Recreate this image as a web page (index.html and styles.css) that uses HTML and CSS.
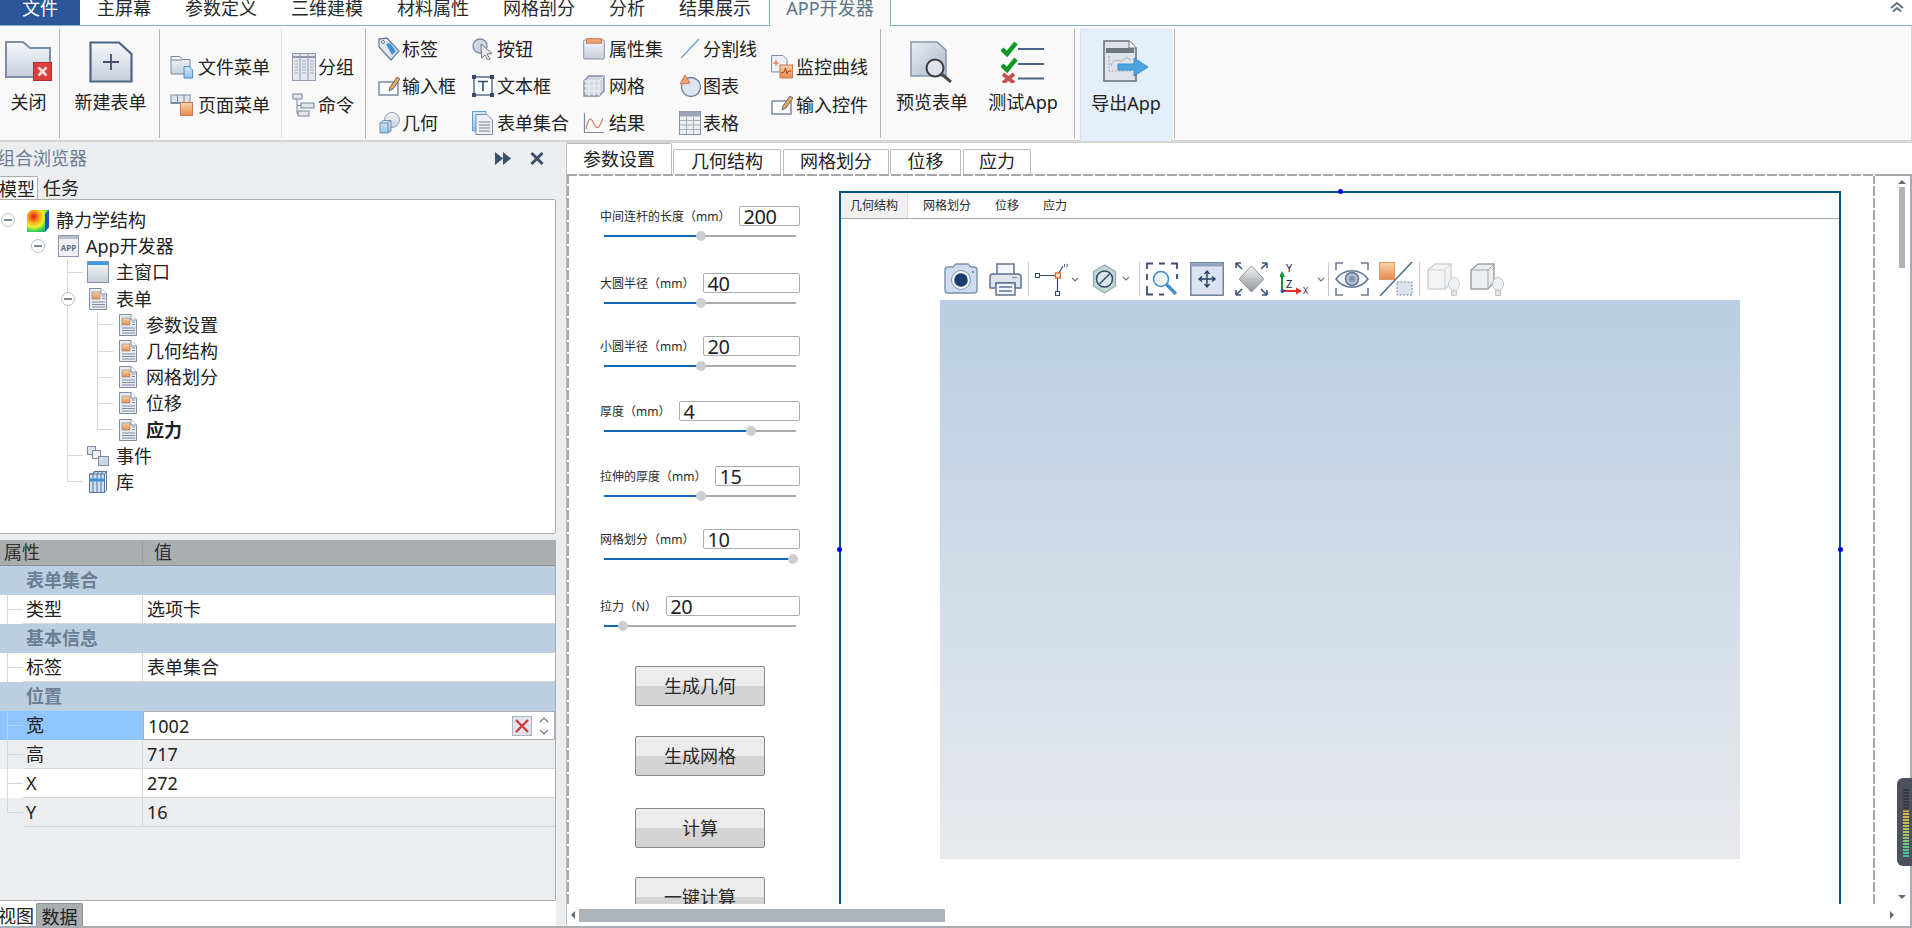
FILE: index.html
```html
<!DOCTYPE html>
<html lang="zh-CN">
<head>
<meta charset="utf-8">
<title>APP开发器</title>
<link rel="stylesheet" href="styles.css">
</head>
<body>
<svg class="defs" width="0" height="0" aria-hidden="true">
  <defs>
    <linearGradient id="gs" x1="0" y1="0" x2="0" y2="1"><stop offset="0" stop-color="#f6f7fa"/><stop offset="1" stop-color="#c6cedb"/></linearGradient>
    <linearGradient id="gd" x1="0" y1="0" x2="1" y2="1"><stop offset="0" stop-color="#e9ecf2"/><stop offset="1" stop-color="#aeb9ca"/></linearGradient>
    <linearGradient id="go" x1="0" y1="0" x2="0" y2="1"><stop offset="0" stop-color="#f8d4a8"/><stop offset="1" stop-color="#e88b4b"/></linearGradient>
    <linearGradient id="gb" x1="0" y1="0" x2="0" y2="1"><stop offset="0" stop-color="#d5e9f8"/><stop offset="1" stop-color="#8fc3ea"/></linearGradient>
    <linearGradient id="gm" x1="0" y1="0" x2="0" y2="1"><stop offset="0" stop-color="#f5f5f5"/><stop offset="1" stop-color="#8e9398"/></linearGradient>
    <radialGradient id="gc" cx=".3" cy=".3" r=".95"><stop offset="0" stop-color="#e0161b"/><stop offset=".28" stop-color="#f7a71b"/><stop offset=".5" stop-color="#eef02a"/><stop offset=".72" stop-color="#32d158"/><stop offset="1" stop-color="#1b6fe0"/></radialGradient>
    <symbol id="doc" viewBox="0 0 18 22">
      <path d="M.5.5H12L17.5 6V21.5H.5Z" fill="#e8ebf1" stroke="#7f8da4"/>
      <path d="M12 .5V6H17.5" fill="#fff" stroke="#7f8da4"/>
      <rect x="3" y="4" width="8" height="7" fill="url(#go)" stroke="#8c8c8c" stroke-width=".7"/>
      <path d="M13 8h3M13 10.500h3M3 14h13M3 16.500h13M3 19h13" stroke="#7e8ba0"/>
    </symbol>
    <symbol id="pencilbox" viewBox="0 0 22 22">
      <rect x="1" y="7" width="19" height="13" fill="#fbfcfd" stroke="#7b8aa3" stroke-width="1.500"/>
      <path d="M11 16l1-4 7-10 3 2-7 10Z" fill="#e8a653" stroke="#5d6c85"/>
    </symbol>
    <symbol id="chev" viewBox="0 0 8 5"><path d="M1 .8L4 3.800L7 .8" fill="none" stroke="#62707e" stroke-width="1.200"/></symbol>
  </defs>
</svg>

<div class="app">
  <nav class="menubar">
    <span class="m-file">文件</span>
    <span class="m-item">主屏幕</span>
    <span class="m-item">参数定义</span>
    <span class="m-item">三维建模</span>
    <span class="m-item">材料属性</span>
    <span class="m-item">网格剖分</span>
    <span class="m-item">分析</span>
    <span class="m-item">结果展示</span>
    <span class="m-active">APP开发器</span>
    <svg class="m-up" width="16" height="12" viewBox="0 0 16 12"><path d="M2 7L8 2L14 7M4 10.500L8 7L12 10.500" fill="none" stroke="#5f6f7b" stroke-width="1.800"/></svg>
  </nav>

  <section class="ribbon">
    <div class="grp g-close">
      <div class="big">
        <svg class="big-ic" width="47" height="42" viewBox="0 0 47 42">
          <path d="M1 1H18L25 7H45V36H1Z" fill="url(#gs)" stroke="#7c8ca6" stroke-width="2"/>
          <rect x="28.500" y="21.500" width="18" height="18" fill="#da3f3f" stroke="#b22e2e"/>
          <path d="M33.500 26.500l8 8M41.500 26.500l-8 8" stroke="#f7dcdc" stroke-width="2.500"/>
        </svg>
        <span>关闭</span>
      </div>
    </div>
    <div class="grp g-new">
      <div class="big">
        <svg class="big-ic" width="44" height="42" viewBox="0 0 44 42">
          <path d="M1.500 1.500H30L42.500 13V40.500H1.500Z" fill="url(#gs)" stroke="#4e6285" stroke-width="2.200"/>
          <path d="M22 13V29M14 21H30" stroke="#3f516e" stroke-width="1.800"/>
        </svg>
        <span>新建表单</span>
      </div>
    </div>
    <div class="grp g-menu stack">
      <div class="it">
        <svg width="24" height="24" viewBox="0 0 24 24"><path d="M1 1.500H10L12 4.500H20V19H1Z" fill="url(#gs)" stroke="#7a89a2"/><path d="M1 5H12" stroke="#7a89a2"/><path d="M14 11.500H19L22.500 15V23H14Z" fill="url(#gb)" stroke="#3f90d0"/></svg>
        <span>文件菜单</span>
      </div>
      <div class="it">
        <svg width="24" height="24" viewBox="0 0 24 24"><rect x="1" y="2" width="19" height="8" fill="#dfe3ea" stroke="#7a89a2"/><path d="M7.500 2V10M14 2V10" stroke="#7a89a2"/><path d="M1 10H12" stroke="#7a89a2" stroke-width="2"/><rect x="10.500" y="9.500" width="12" height="13" fill="url(#go)" stroke="#c9785a"/></svg>
        <span>页面菜单</span>
      </div>
    </div>
    <div class="grp g-group stack">
      <div class="it">
        <svg width="24" height="28" viewBox="0 0 24 28"><rect x=".5" y=".5" width="23" height="27" fill="#e4e7ec" stroke="#8e9ab0"/><path d="M1 4H23" stroke="#8e9ab0" stroke-width="2"/><path d="M8 1V27M16 1V27" stroke="#8e9ab0"/><path d="M3 8h3M3 11h3M3 14h3M3 17h3M3 20h3M10 8h4M10 11h4M10 14h4M10 17h4M10 20h4M18 8h4M18 11h4M18 14h4M18 17h4M18 20h4" stroke="#a4aebf"/></svg>
        <span>分组</span>
      </div>
      <div class="it">
        <svg width="24" height="24" viewBox="0 0 24 24"><rect x="1" y="1" width="9" height="5" fill="#e2e6ec" stroke="#75849c"/><rect x="9" y="10" width="13" height="5" fill="#e2e6ec" stroke="#75849c"/><rect x="6" y="18" width="11" height="5" fill="#e2e6ec" stroke="#75849c"/><path d="M5 6V20.500H6M5 12.500H9" fill="none" stroke="#75849c"/></svg>
        <span>命令</span>
      </div>
    </div>
    <div class="grp g-ctl">
      <div class="col c1">
        <div class="it"><svg width="22" height="24" viewBox="0 0 22 24"><path d="M1 2L9 1L21 14L13 23L1 10Z" fill="#dfe6f0" stroke="#6b7d9a" stroke-width="1.300"/><path d="M8 7l4-1 6 8-4 4Z" fill="#3e8fd6"/><circle cx="5" cy="5" r="1.500" fill="#fff" stroke="#6b7d9a"/></svg><span>标签</span></div>
        <div class="it"><svg width="22" height="22"><use href="#pencilbox"/></svg><span>输入框</span></div>
        <div class="it"><svg width="22" height="22" viewBox="0 0 22 22"><circle cx="14" cy="8" r="7.500" fill="url(#gs)" stroke="#8f9db3"/><path d="M2 11L5 8.500H13V19L10 21H2Z" fill="url(#gb)" stroke="#7a8ea9"/><path d="M2 11H10V21M10 11L13 8.500" fill="none" stroke="#7a8ea9"/></svg><span>几何</span></div>
      </div>
      <div class="col c2">
        <div class="it"><svg width="22" height="22" viewBox="0 0 22 22"><circle cx="8" cy="8" r="7" fill="#cfd8e5" stroke="#7c8ca6" stroke-width="1.300"/><path d="M9 6L20 15.500L15 16L18 21L15.500 22L13 17L9.500 20Z" fill="#e9ebef" stroke="#6d7786"/></svg><span>按钮</span></div>
        <div class="it"><svg width="22" height="22" viewBox="0 0 22 22"><rect x="2" y="2" width="18" height="18" fill="#fbfcfd" stroke="#34486b" stroke-width="1.200"/><path d="M6 6.500H16M11 6.500V16" stroke="#34486b" stroke-width="1.600"/><path d="M0 0h4v4H0ZM18 0h4v4h-4ZM0 18h4v4H0ZM18 18h4v4h-4Z" fill="#34486b"/></svg><span>文本框</span></div>
        <div class="it"><svg width="22" height="24" viewBox="0 0 22 24"><path d="M.5.5H14V20H.5Z" fill="url(#gb)" stroke="#5f9fd4"/><path d="M4 3.500H15L20.500 9V23.500H4Z" fill="#eef0f4" stroke="#7c8ca6"/><path d="M7 11h11M7 14h11M7 17h11M7 20h11" stroke="#6d7d96"/></svg><span>表单集合</span></div>
      </div>
      <div class="col c3">
        <div class="it"><svg width="22" height="22" viewBox="0 0 22 22"><rect x=".7" y="2" width="20.600" height="19" rx="1" fill="url(#gs)" stroke="#8593a9"/><rect x="3.500" y=".7" width="15" height="4.500" fill="#f0a46c" stroke="#c9785a"/></svg><span>属性集</span></div>
        <div class="it"><svg width="22" height="22" viewBox="0 0 22 22"><path d="M1 6L6 1H21V16L16 21H1Z" fill="#d3d8e0" stroke="#7c8ca6" stroke-width="1.400"/><path d="M1 6H16V21M16 6L21 1M6 6V21M11 6V21M1 11H16M1 16H16" fill="none" stroke="#f2f4f7"/></svg><span>网格</span></div>
        <div class="it"><svg width="22" height="22" viewBox="0 0 22 22"><path d="M1.500 1V20.500H21" fill="none" stroke="#7c8ca6" stroke-width="1.200"/><path d="M3 17C6 4 8 5 11 12S17 15 20 6" fill="none" stroke="#c9785a" stroke-width="1.100"/></svg><span>结果</span></div>
      </div>
      <div class="col c4">
        <div class="it"><svg width="22" height="22" viewBox="0 0 22 22"><path d="M2 20L20 1" stroke="#6aa0d0" stroke-width="1.300"/></svg><span>分割线</span></div>
        <div class="it"><svg width="22" height="24" viewBox="0 0 22 24"><circle cx="12" cy="13" r="9.500" fill="#dfe5ee" stroke="#6e82a5" stroke-width="1.300"/><path d="M1 10L6 1L11 9Z" fill="#f0a46c" stroke="#c9785a"/></svg><span>图表</span></div>
        <div class="it"><svg width="22" height="24" viewBox="0 0 22 24"><rect x=".5" y=".5" width="21" height="23" fill="#eceef2" stroke="#8593a9"/><path d="M1 3h20" stroke="#9aa6b8" stroke-width="5"/><path d="M1 9.500h20M1 14h20M1 18.500h20M7.500 6v17M14.500 6v17" stroke="#a5afbe"/></svg><span>表格</span></div>
      </div>
      <div class="col c5 stack">
        <div class="it"><svg width="22" height="24" viewBox="0 0 22 24"><path d="M.5.500H12L16 4.500V17H.5Z" fill="#eef0f4" stroke="#7c8ca6"/><path d="M5 5v6M2 8h6" stroke="#d8643c"/><rect x="9" y="10" width="12.500" height="13" fill="url(#go)" stroke="#c9785a"/><path d="M10 18l3-1 1.500-4 1.500 6 1.500-3h3" fill="none" stroke="#a83e20"/></svg><span>监控曲线</span></div>
        <div class="it"><svg width="22" height="22"><use href="#pencilbox"/></svg><span>输入控件</span></div>
      </div>
    </div>
    <div class="grp g-test">
      <div class="big">
        <svg class="big-ic" width="44" height="42" viewBox="0 0 44 42">
          <path d="M1 1H27L36 9V35H1Z" fill="url(#gd)" stroke="#8794ad" stroke-width="1.500"/>
          <circle cx="25" cy="27" r="8.500" fill="#eceef2" fill-opacity=".7" stroke="#3d3d3d" stroke-width="2"/>
          <path d="M31.500 33L41 41" stroke="#4a4a4a" stroke-width="3"/>
        </svg>
        <span>预览表单</span>
      </div>
      <div class="big b-app">
        <svg class="big-ic" width="44" height="42" viewBox="0 0 44 42">
          <path d="M1 8L6 13L15 2" fill="none" stroke="#0f9a24" stroke-width="4.500"/>
          <path d="M1 24L6 29L15 18" fill="none" stroke="#0f9a24" stroke-width="4.500"/>
          <path d="M2 33L13 42M13 33L2 42" fill="none" stroke="#c8504f" stroke-width="3.800"/>
          <path d="M17 8H43M17 23H43M17 37.500H43" stroke="#4a6388" stroke-width="2"/>
        </svg>
        <span>测试App</span>
      </div>
    </div>
    <div class="grp g-export">
      <div class="big">
        <svg class="big-ic" width="46" height="42" viewBox="0 0 46 42">
          <path d="M1 1H26L33 8V41H1Z" fill="#dfe3e8" stroke="#6a7078" stroke-width="1.600"/>
          <path d="M26 1V8H33" fill="#fff" stroke="#6a7078"/>
          <rect x="3" y="8" width="28" height="5" fill="#70767e"/>
          <path d="M6 16V31H28" fill="none" stroke="#9aa2ac" stroke-dasharray="2 1.500"/>
          <path d="M8 26C12 15 16 24 20 20S25 19 28 20" fill="none" stroke="#a3aab5"/>
          <path d="M15 24H31V18L45 27L31 36V30H15Z" fill="#4ba4e0" stroke="#3a8fd0"/>
        </svg>
        <span>导出App</span>
      </div>
    </div>
    <div class="grp g-rest"></div>
  </section>

  <main class="main">
    <aside class="left">
      <header class="pane-title">
        <span>组合浏览器</span>
        <svg class="ic-dbl" width="16" height="13" viewBox="0 0 16 13"><path d="M0 0L8 6.500L0 13ZM8 0L16 6.500L8 13Z" fill="#3d5269"/></svg>
        <svg class="ic-x" width="14" height="13" viewBox="0 0 14 13"><path d="M1.500 1L12.500 12M12.500 1L1.500 12" stroke="#3d5269" stroke-width="3"/></svg>
      </header>
      <div class="pane-tabs">
        <span class="pt-on">模型</span>
        <span class="pt-off">任务</span>
      </div>
      <div class="tree">
        <i class="vl vl-a"></i>
        <i class="vl vl-b"></i>
        <div class="row l0"><i class="exp"></i>
          <span class="ti"><svg width="22" height="23" viewBox="0 0 22 23"><path d="M4 1H22V18L18 23H0V5Z" fill="url(#gc)"/><path d="M22 1V18L18 23V5Z" fill="#1657c8"/></svg></span><span>静力学结构</span></div>
        <div class="row l1"><i class="exp"></i>
          <span class="ti"><svg width="21" height="22" viewBox="0 0 21 22"><rect x=".5" y=".5" width="20" height="21" fill="#eef0f3" stroke="#8d97a8"/><rect x="1" y="1" width="19" height="3" fill="#b8c0cc"/><text x="10.500" y="16" class="appt">APP</text></svg></span><span>App开发器</span></div>
        <div class="row l2"><i class="br"></i>
          <span class="ti"><svg width="22" height="22" viewBox="0 0 22 22"><rect x=".5" y=".5" width="21" height="21" fill="url(#gs)" stroke="#8593a9"/><rect x="1" y="1" width="20" height="3" fill="#3d9be0"/></svg></span><span>主窗口</span></div>
        <div class="row l2"><i class="exp"></i>
          <span class="ti"><svg width="18" height="22"><use href="#doc"/></svg></span><span>表单</span></div>
        <div class="row l3"><i class="br"></i><span class="ti"><svg width="18" height="22"><use href="#doc"/></svg></span><span>参数设置</span></div>
        <div class="row l3"><i class="br"></i><span class="ti"><svg width="18" height="22"><use href="#doc"/></svg></span><span>几何结构</span></div>
        <div class="row l3"><i class="br"></i><span class="ti"><svg width="18" height="22"><use href="#doc"/></svg></span><span>网格划分</span></div>
        <div class="row l3"><i class="br"></i><span class="ti"><svg width="18" height="22"><use href="#doc"/></svg></span><span>位移</span></div>
        <div class="row l3"><i class="br"></i><span class="ti"><svg width="18" height="22"><use href="#doc"/></svg></span><strong>应力</strong></div>
        <div class="row l2"><i class="br"></i>
          <span class="ti"><svg width="22" height="20" viewBox="0 0 22 20"><rect x=".5" y=".5" width="8" height="8" fill="#dfe3ea" stroke="#7c8ca6"/><rect x="5.500" y="4.500" width="8" height="8" fill="#eceff3" stroke="#7c8ca6"/><rect x="11.500" y="10.500" width="10" height="9" fill="#cfd9e6" stroke="#7c8ca6"/></svg></span><span>事件</span></div>
        <div class="row l2"><i class="br"></i>
          <span class="ti"><svg width="18" height="22" viewBox="0 0 18 22"><path d="M3.500 3L5 .5H17.500L15.500 3V21.500H.5V3Z" fill="#cfe0f0" stroke="#55779f"/><path d="M.5 3h15M4 3v18.500M8 3v18.500M12 3v18.500M4 3L6 .5M8 3l2-2.500M12 3l2-2.500M15.500 21.500L17.500 19V.5" fill="none" stroke="#55779f"/><path d="M1 9h14" stroke="#3d94d8" stroke-width="3"/></svg></span><span>库</span></div>
      </div>

      <div class="props">
        <div class="p-head"><span class="ph-name">属性</span><span class="ph-val">值</span></div>
        <div class="p-grp">表单集合</div>
        <div class="p-row r-w"><i class="gut"></i><span class="p-n">类型</span><span class="p-v">选项卡</span></div>
        <div class="p-grp">基本信息</div>
        <div class="p-row r-w"><i class="gut"></i><span class="p-n">标签</span><span class="p-v">表单集合</span></div>
        <div class="p-grp">位置</div>
        <div class="p-row r-sel"><i class="gut"></i><span class="p-n">宽</span>
          <div class="p-edit"><span>1002</span>
            <svg class="ed-x" width="20" height="20" viewBox="0 0 20 20"><rect x=".5" y=".5" width="19" height="19" fill="#dfe4ec" stroke="#a9b4c4"/><path d="M4 4l12 12M16 4L4 16" stroke="#d4383b" stroke-width="2.400"/></svg>
            <svg class="ed-s" width="12" height="22" viewBox="0 0 12 22"><path d="M2 7L6 3L10 7M2 15L6 19L10 15" fill="none" stroke="#6a7886" stroke-width="1.200"/></svg>
          </div>
        </div>
        <div class="p-row r-g"><i class="gut"></i><span class="p-n">高</span><span class="p-v">717</span></div>
        <div class="p-row r-w"><i class="gut"></i><span class="p-n">X</span><span class="p-v">272</span></div>
        <div class="p-row r-g"><i class="gut end"></i><span class="p-n">Y</span><span class="p-v">16</span></div>
      </div>

      <div class="pane-foot">
        <span class="pf-off">视图</span>
        <span class="pf-on">数据</span>
      </div>
    </aside>

    <section class="right">
      <div class="dtabs">
        <span class="dt on">参数设置</span>
        <span class="dt t2">几何结构</span>
        <span class="dt t3">网格划分</span>
        <span class="dt t4">位移</span>
        <span class="dt t5">应力</span>
      </div>
      <div class="dframe">
        <div class="canvas">
          <div class="form">
            <div class="field f67"><div class="line"><span class="lbl">中间连杆的长度（mm）</span><div class="inp">200</div></div><div class="slider" style="--v:50.500%"><i></i></div></div>
            <div class="field f63"><div class="line"><span class="lbl">大圆半径（mm）</span><div class="inp">40</div></div><div class="slider" style="--v:50.500%"><i></i></div></div>
            <div class="field f65"><div class="line"><span class="lbl">小圆半径（mm）</span><div class="inp">20</div></div><div class="slider" style="--v:50.500%"><i></i></div></div>
            <div class="field f65"><div class="line"><span class="lbl">厚度（mm）</span><div class="inp">4</div></div><div class="slider" style="--v:76.500%"><i></i></div></div>
            <div class="field f63"><div class="line"><span class="lbl">拉伸的厚度（mm）</span><div class="inp">15</div></div><div class="slider" style="--v:50.500%"><i></i></div></div>
            <div class="field f67"><div class="line"><span class="lbl">网格划分（mm）</span><div class="inp">10</div></div><div class="slider" style="--v:98.400%"><i></i></div></div>
            <div class="field f70"><div class="line"><span class="lbl">拉力（N）</span><div class="inp">20</div></div><div class="slider" style="--v:10%"><i></i></div></div>
            <div class="btn g30">生成几何</div>
            <div class="btn g32">生成网格</div>
            <div class="btn g29">计算</div>
            <div class="btn">一键计算</div>
          </div>

          <div class="sel">
            <i class="hd hd-t"></i><i class="hd hd-l"></i><i class="hd hd-r"></i>
            <div class="itabs">
              <span class="it-on">几何结构</span>
              <span class="it-off a">网格划分</span>
              <span class="it-off b">位移</span>
              <span class="it-off c">应力</span>
            </div>
            <div class="tools">
              <svg width="45" height="34" viewBox="0 0 45 34"><path d="M1 8C1 6 2 5 4 5H9L12 2H24L27 5H30C32 5 33 6 33 8V28C33 30 32 31 30 31H4C2 31 1 30 1 28Z" fill="#cdddee" stroke="#7d93b0" stroke-width="1.400"/><circle cx="17" cy="18" r="9.500" fill="#f4f7fb" stroke="#7d93b0"/><circle cx="17" cy="18" r="6.800" fill="#1f3a6e"/><circle cx="29" cy="10" r="1" fill="#566f92"/></svg>
              <svg width="39" height="34" viewBox="0 0 39 34"><path d="M8 12V2H25V12" fill="#f4f6f9" stroke="#5d7396" stroke-width="1.500"/><path d="M1 15C1 13 2 12 4 12H29C31 12 32 13 32 15V26H26V21H7V26H1Z" fill="#dde4ee" stroke="#5d7396" stroke-width="1.500"/><path d="M7 21H26V33H7Z" fill="#f4f6f9" stroke="#5d7396" stroke-width="1.500"/><path d="M10 25H23M10 29H23" stroke="#5d7396" stroke-width="1.500"/><path d="M23 15.500h5" stroke="#8ea0ba" stroke-width="1.500"/></svg>
              <i class="sep"></i>
              <svg width="57" height="34" viewBox="0 0 57 34"><path d="M2 13.500H22.500M22.500 13.500V30M22.500 13.500L28 4" fill="none" stroke="#34496b" stroke-width="1.200"/><rect x=".5" y="11.500" width="4" height="4" fill="#fff" stroke="#34496b"/><rect x="20.500" y="11" width="5" height="5" fill="#f5e0cc" stroke="#d26a2e" stroke-width="1.300"/><rect x="20.500" y="29.500" width="4" height="4" fill="#fff" stroke="#34496b"/><path d="M29.500 2v3M31.500 2c1.500 0 1.500 3-.5 3" fill="none" stroke="#34496b" stroke-width=".8"/><svg x="36" y="15" width="8" height="5"><use href="#chev"/></svg></svg>
              <svg width="47" height="34" viewBox="0 0 47 34"><path d="M12.500 3L23.500 9.500V24L12.500 31L1.500 24V9.500Z" fill="#c5d6d6" stroke="#90aab0" stroke-width="1.300"/><circle cx="12.500" cy="17" r="8" fill="#dbe6ea" stroke="#2e4a66" stroke-width="1.500"/><path d="M7.500 22L17.500 12" stroke="#2e4a66" stroke-width="1.500"/><svg x="30" y="14" width="8" height="5"><use href="#chev"/></svg></svg>
              <i class="sep"></i>
              <svg width="44" height="34" viewBox="0 0 44 34"><path d="M1 7V1.500H7M13 1.500H19M25 1.500H31V7M31 12V17M1 12V18M1 24V32.500H7M13 32.500H18" fill="none" stroke="#3a4f73" stroke-width="1.800"/><circle cx="15" cy="17" r="7.500" fill="#eef4fa" stroke="#3b8ccc" stroke-width="1.500"/><path d="M20.500 22.500L30 32" stroke="#3b8ccc" stroke-width="3.200"/></svg>
              <svg width="45" height="34" viewBox="0 0 45 34"><rect x=".8" y=".8" width="32.400" height="32.400" fill="#dae3ef" stroke="#6e82a1" stroke-width="1.500"/><rect x="1.500" y="1.500" width="31" height="3" fill="#8fa3bf"/><path d="M17 9V25M9 17H25M14.500 12L17 9L19.500 12M14.500 22L17 25L19.500 22M12 14.500L9 17L12 19.500M22 14.500L25 17L22 19.500" fill="none" stroke="#2b3f60" stroke-width="1.400"/></svg>
              <svg width="45" height="34" viewBox="0 0 45 34"><path d="M16.500 4L29 17L16.500 30L4 17Z" fill="url(#gm)" stroke="#8a8f95"/><path d="M4 17H29" stroke="#b9bcc0"/><path d="M1 1H6M1 1V6M32 1H27M32 1V6M1 33H6M1 33V28M32 33H27M32 33V28M1 1L7 7M32 1L26 7M1 33L7 27M32 33L26 27" fill="none" stroke="#3c5479" stroke-width="1.600"/></svg>
              <svg width="48" height="34" viewBox="0 0 48 34"><path d="M2 14V28" stroke="#12923a" stroke-width="2"/><path d="M-1 15L2 9L5 15Z" fill="#12923a"/><path d="M2 29H17" stroke="#e0312f" stroke-width="2"/><path d="M16 25.500L22 29L16 32.500Z" fill="#e0312f"/><circle cx="2.500" cy="29" r="2" fill="#2a4fa8"/><text x="6" y="10" class="axt">Y</text><text x="6" y="26" class="axt">Z</text><text x="23" y="32" class="axt sm">X</text><svg x="37" y="15" width="8" height="5"><use href="#chev"/></svg></svg>
              <i class="sep"></i>
              <svg width="44" height="34" viewBox="0 0 44 34"><path d="M1 8V1H8M26 1H33V8M1 26V33H8M26 33H33V26" fill="none" stroke="#6e7f98" stroke-width="1.600"/><path d="M1 17C9 6 25 6 33 17C25 28 9 28 1 17Z" fill="#f1f3f6" stroke="#5f7595" stroke-width="1.500"/><circle cx="17" cy="17" r="6.500" fill="#b6c0ce" stroke="#5f7595" stroke-width="1.500"/><circle cx="17" cy="17" r="3.200" fill="#8796ab"/></svg>
              <svg width="40" height="34" viewBox="0 0 40 34"><rect x=".5" y=".5" width="15" height="17" fill="url(#go)" stroke="#d99a6c"/><rect x="18" y="20" width="15" height="13" fill="#dce3ed" stroke="#6e82a1" stroke-dasharray="2 1.500"/><path d="M33 0L1 34" stroke="#4e6a8f" stroke-width="1.500"/></svg>
              <i class="sep s8"></i>
              <svg width="43" height="34" viewBox="0 0 43 34"><path d="M1 8L8 2H24V20L18 27H1Z" fill="#f2f3f4" stroke="#cfd2d5" stroke-width="1.500"/><path d="M1 8H18V27M18 8L24 2" fill="none" stroke="#cfd2d5"/><ellipse cx="27" cy="22" rx="5.500" ry="6.500" fill="#f1f2f3" stroke="#c8cbce"/><path d="M24.500 28.500h5v5h-5Z" fill="#e2e4e6" stroke="#c8cbce"/></svg>
              <svg width="35" height="34" viewBox="0 0 35 34"><path d="M1 8L8 2H24V20L18 27H1Z" fill="#eceeef" stroke="#a0a4a8" stroke-width="1.500"/><path d="M1 8H18V27M18 8L24 2" fill="none" stroke="#a0a4a8"/><ellipse cx="28" cy="22" rx="5.500" ry="6.500" fill="#eef0f1" stroke="#bfc2c5"/><path d="M25.500 28.500h5v5h-5Z" fill="#e2e4e6" stroke="#bfc2c5"/></svg>
            </div>
            <div class="viewer"></div>
          </div>
        </div>

        <div class="vbar">
          <i class="ar-up"></i>
          <i class="vthumb"></i>
          <i class="ar-down"></i>
        </div>
        <div class="hbar">
          <i class="ar-left"></i>
          <i class="hthumb"></i>
          <i class="ar-right"></i>
        </div>
      </div>
      <div class="meter"><i></i></div>
    </section>
  </main>
</div>
</body>
</html>
```
FILE: styles.css
```css
* { box-sizing: border-box; }
html, body { margin: 0; padding: 0; }
body {
  width: 1912px;
  height: 928px;
  overflow: hidden;
  background: #fff;
  color: #222;
  font-family: "Noto Sans", "Noto Sans CJK SC", sans-serif;
  font-size: 18px;
  line-height: 24px;
}
i { display: block; font-style: normal; }
svg { display: block; flex: none; }
.defs { position: absolute; }
.app { display: flex; flex-direction: column; height: 928px; }

/* top menu */
.menubar {
  display: flex;
  height: 26px;
  line-height: 17px;
  border-bottom: 1px solid #7fb2ba;
  position: relative;
  overflow: visible;
}
.m-file { width: 80px; height: 25px; background: #2b579a; color: #fff; text-align: center; }
.m-item { padding: 0 17px; color: #2a2a2a; overflow: hidden; height: 25px; }
.m-active {
  margin-left: 1px;
  width: 122px;
  height: 26px;
  text-align: center;
  color: #5c7587;
  background: #f9f9f9;
  border: 1px solid #7fb2ba;
  border-width: 0 1px;
}
.m-up { position: absolute; right: 7px; top: 1px; }

/* ribbon */
.ribbon {
  display: flex;
  height: 116px;
  padding-top: 3px;
  background: #f9f9f9;
  border-bottom: 2px solid #d5d5d5;
  border-right: 1px solid #d5d5d5;
}
.grp { height: 109px; flex: none; border-right: 1px solid #b4b4b4; }
.g-close { width: 60px; }
.g-close .big { width: 57px; }
.g-new { width: 100px; }
.g-new .big { padding-left: 2px; }
.g-menu { width: 122px; padding: 19px 0 0 10px; border-right-color: #e3e3e3; }
.g-group { width: 84px; padding: 19px 0 0 10px; }
.g-ctl { width: 515px; display: flex; padding: 1px 0 0 12px; }
.g-test { width: 194px; display: flex; }
.g-export { width: 92px; margin-left: 5px; height: 112px; border: 1px solid #d5e3f3; border-bottom: 0; background: #e3eefb; }
.g-rest { width: 3px; }
.big { display: flex; flex-direction: column; align-items: center; padding-top: 12px; white-space: nowrap; }
.big > span { margin-top: 7px; }
.big-ic { height: 42px; }
.g-test .big { width: 72px; margin-left: 15px; }
.g-test .b-app { margin-left: 19px; }
.g-export .big { padding-top: 10px; }
.g-export .big > span { margin-top: 9px; }
.it { display: flex; align-items: center; height: 37px; white-space: nowrap; }
.it > svg { margin-right: 4px; }
.stack .it { height: 38px; }
.g-group .it > svg { margin-right: 2px; }
.col { flex: none; }
.col .it { width: 100%; }
.col .it > svg { width: 22px; }
.c1 { width: 94px; }
.c1 .it > svg { margin-right: 2px; }
.c2 { width: 111px; }
.c2 .it > svg { margin-right: 3px; }
.c3 { width: 96px; }
.c4 { width: 92px; }
.c4 .it > svg { margin-right: 2px; }
.c5 { width: 110px; padding-top: 18px; }
.c5 .it > svg { margin-right: 3px; }

/* body */
.main { display: flex; flex: 1; min-height: 0; }
.left {
  width: 566px;
  flex: none;
  display: flex;
  flex-direction: column;
  background: #ecedef;
  padding-right: 10px;
  border-bottom: 2px solid #a9adb1;
}
.pane-title { height: 32px; margin-bottom: 2px; display: flex; align-items: center; color: #6a7f95; margin-left: -3px; }
.pane-title > span { flex: 1; }
.ic-dbl { margin-right: 19px; }
.ic-x { margin-right: 12px; }
.pane-tabs { height: 23px; display: flex; line-height: 24px; }
.pt-on { width: 38px; background: #fff; border: 1px solid #a9adb1; border-left: 0; border-bottom: 0; text-align: right; padding-right: 2px; white-space: nowrap; direction: rtl; border-radius: 0 2px 0 0; }
.pt-off { margin-left: 5px; }

.tree {
  position: relative;
  height: 335px;
  margin-left: -2px;
  padding-top: 7px;
  background: #fff;
  border: 1px solid #a9adb1;
  border-radius: 2px;
}
.row { display: flex; align-items: center; height: 26.200px; position: relative; white-space: nowrap; }
.l0 { padding-left: 2px; }
.l1 { padding-left: 32px; }
.l2 { padding-left: 62px; }
.l3 { padding-left: 92px; }
.exp {
  position: relative;
  width: 14px;
  height: 14px;
  flex: none;
  margin-right: 12px;
  border: 1px solid #b3bcc5;
  border-radius: 50%;
  background: #fff;
  z-index: 1;
}
.exp::after { content: ""; position: absolute; left: 2px; right: 2px; top: 5px; height: 2px; background: #7d8a97; }
.br { position: relative; width: 14px; height: 1px; flex: none; margin-right: 12px; }
.br::before { content: ""; position: absolute; left: 6px; top: 0; width: 16px; height: 1px; background: #d3d7db; }
.ti { width: 22px; margin-right: 7px; flex: none; display: flex; justify-content: center; }
.row strong { font-weight: 700; }
.vl { position: absolute; width: 1px; background: #d3d7db; }
.vl-a { left: 68px; top: 60px; height: 222px; }
.vl-b { left: 98px; top: 112px; height: 117px; }
.appt { font: 700 8px "Noto Sans", sans-serif; fill: #5d6c82; text-anchor: middle; }

.props {
  margin-top: 6px;
  height: 361px;
  border-right: 1px solid #a9adb1;
  border-bottom: 1px solid #a9adb1;
  border-radius: 0 0 2px 0;
}
.p-head { display: flex; height: 26px; background: #aaaeb1; border-bottom: 1px solid #8d9194; line-height: 25px; color: #2e2e2e; }
.ph-name { width: 143px; padding-left: 4px; border-right: 1px solid #9a9ea1; }
.ph-val { padding-left: 11px; }
.p-grp { height: 29px; line-height: 28px; background: #bbcfe1; padding-left: 26px; font-weight: 700; color: #6b7e94; }
.p-row { display: flex; height: 29px; line-height: 28px; }
.r-w { background: #fff; }
.r-g { background: #ecedef; }
.gut { width: 23px; flex: none; position: relative; }
.gut::before { content: ""; position: absolute; left: 7px; top: 0; bottom: 0; width: 1px; background: #d3d7db; }
.gut::after { content: ""; position: absolute; left: 7px; right: 0; top: 14px; height: 1px; background: #d3d7db; }
.gut.end::before { bottom: 14px; }
.p-n { width: 120px; flex: none; padding-left: 3px; border-right: 1px solid #d5d7d9; border-bottom: 1px solid #d5d7d9; }
.p-v { flex: 1; padding-left: 4px; border-bottom: 1px solid #d5d7d9; }
.r-sel { background: #fff; }
.r-sel .gut { background: #8fc4fc; }
.r-sel .gut::before, .r-sel .gut::after { background: #b5d6f7; }
.r-sel .p-n { background: #8fc4fc; border-color: #8fc4fc; }
.p-edit { flex: 1; display: flex; align-items: center; padding-left: 4px; border: 1px solid #a9adb1; line-height: 26px; }
.p-edit > span { flex: 1; }
.ed-x { margin-right: 6px; }
.ed-s { margin-right: 4px; }

.pane-foot { flex: 1; display: flex; background: #fff; line-height: 26px; padding-top: 2px; overflow: hidden; }
.pf-off { width: 38px; margin-left: -2px; }
.pf-on { width: 47px; background: #aaaeb1; border: 1px solid #8d9194; border-bottom: 0; text-align: center; border-radius: 2px 2px 0 0; }

/* designer */
.right { flex: 1; min-width: 0; display: flex; flex-direction: column; position: relative; }
.dtabs { height: 32px; display: flex; border-top: 1px solid #d5d5d5; align-items: flex-end; }
.dt { height: 25px; line-height: 23px; text-align: center; background: #fff; border: 1px solid #b9bcc0; border-bottom: 0; border-radius: 2px 2px 0 0; }
.dt.on { width: 106px; height: 31px; line-height: 31px; }
.t2 { width: 108px; margin-left: 1px; }
.t3 { width: 106px; margin-left: 2px; }
.t4 { width: 71px; margin-left: 1px; }
.t5 { width: 68px; margin-left: 2px; }

.dframe {
  flex: 1;
  min-height: 0;
  display: grid;
  grid-template-columns: 1fr 35px;
  grid-template-rows: 1fr 22px;
  border-left: 1px solid #b9bcc0;
  border-right: 2px solid #a9adb1;
  border-bottom: 2px solid #a9adb1;
  background: #fff;
}
.canvas {
  display: flex;
  align-items: flex-start;
  overflow: hidden;
  padding: 2px 2px 0 33px;
  background:
    repeating-linear-gradient(90deg, #a4a8ac 0 10px, #fff 10px 12px) top / 100% 2px no-repeat,
    repeating-linear-gradient(#a4a8ac 0 10px, #fff 10px 12px) left / 2px 100% no-repeat,
    repeating-linear-gradient(#a4a8ac 0 10px, #fff 10px 12px) right / 2px 100% no-repeat;
}
.form { width: 200px; flex: none; padding-top: 30px; }
.field { display: flex; flex-direction: column; }
.f63 { height: 63px; }
.f65 { height: 65px; }
.f67 { height: 67px; }
.f70 { height: 70px; }
.line { display: flex; align-items: center; gap: 9px; height: 20px; }
.lbl { font-size: 12px; line-height: 20px; padding-top: 2px; white-space: nowrap; color: #2a2a2a; flex: none; }
.inp { flex: 1; height: 20px; line-height: 19px; border: 1px solid #a9adb1; border-radius: 2px; padding-left: 3px; font-size: 20px; letter-spacing: -.4px; color: #1f1f1f; }
.slider { position: relative; width: 192px; height: 2px; margin: 9px 0 0 4px; background: linear-gradient(to right, #0f67b8 var(--v), #aaa var(--v)); }
.slider > i { position: absolute; left: var(--v); top: -4px; width: 10px; height: 10px; margin-left: -5px; border-radius: 50%; background: #cdcdcd; }
.btn {
  width: 130px;
  height: 40px;
  margin-left: 35px;
  line-height: 38px;
  text-align: center;
  border: 1px solid #8a8a8a;
  border-radius: 2px;
  background: linear-gradient(#ececec 50%, #d4d4d4 50%);
  color: #2a2a2a;
}
.g30 { margin-bottom: 30px; }
.g32 { margin-bottom: 32px; }
.g29 { margin-bottom: 29px; }

.sel {
  position: relative;
  width: 1002px;
  height: 717px;
  flex: none;
  margin: 15px 0 0 39px;
  border: 2px solid #02538e;
  background: #fff;
}
.hd { position: absolute; width: 5px; height: 5px; border-radius: 50%; background: #0000ff; z-index: 2; }
.hd-t { left: 497px; top: -4px; }
.hd-l { left: -4px; top: 354px; }
.hd-r { right: -4px; top: 354px; }
.itabs { display: flex; height: 26px; border-bottom: 1px solid #aaa; font-size: 12px; line-height: 25px; color: #2a2a2a; }
.it-on { width: 67px; background: #f0f0f0; border-right: 1px solid #ddd; text-align: center; }
.it-off.a { margin-left: 15px; }
.it-off.b { margin-left: 24px; }
.it-off.c { margin-left: 24px; }
.tools { display: flex; height: 34px; margin: 43px 0 0 103px; }
.sep { width: 1px; height: 34px; margin-right: 6px; background: #c5c9ce; flex: none; }
.sep.s8 { margin-right: 7px; }
.axt { font: 11px "Noto Sans", sans-serif; fill: #1d2c44; }
.axt.sm { font-size: 9px; }
.viewer { width: 800px; height: 559px; margin: 4px 0 0 99px; background: linear-gradient(#bacee3, #e8e9ec); }

.vbar { display: flex; flex-direction: column; align-items: center; width: 35px; padding: 4px 1px 5px 20px; border-top: 2px solid #a4a8ac; }
.ar-up { width: 0; height: 0; border: 4.500px solid transparent; border-top: 0; border-bottom: 4px solid #5c6f7e; }
.vthumb { width: 6px; height: 81px; margin-top: 3px; background: #aeb3b7; }
.ar-down { width: 0; height: 0; margin-top: auto; border: 4.500px solid transparent; border-bottom: 0; border-top: 4px solid #5c6f7e; }
.hbar { grid-column: 1 / 3; display: flex; align-items: center; padding: 0 16px 0 4px; }
.ar-left { width: 0; height: 0; border: 4.500px solid transparent; border-left: 0; border-right: 4px solid #5c6f7e; }
.hthumb { width: 366px; height: 13px; margin-left: 4px; background: #aeb3b7; }
.ar-right { width: 0; height: 0; margin-left: auto; border: 4.500px solid transparent; border-right: 0; border-left: 4px solid #5c6f7e; }

.meter {
  position: absolute;
  right: 0;
  top: 636px;
  width: 15px;
  height: 88px;
  padding: 10px 3px 9px 6px;
  background: #4d515e;
  border-radius: 6px 0 0 6px;
}
.meter > i {
  width: 6px;
  height: 100%;
  background:
    repeating-linear-gradient(#4d515e 0 1px, transparent 1px 3px),
    linear-gradient(#383b44 0 32%, #d6b13c 33%, #b9c94e 58%, #37c4a6 100%);
}
```
